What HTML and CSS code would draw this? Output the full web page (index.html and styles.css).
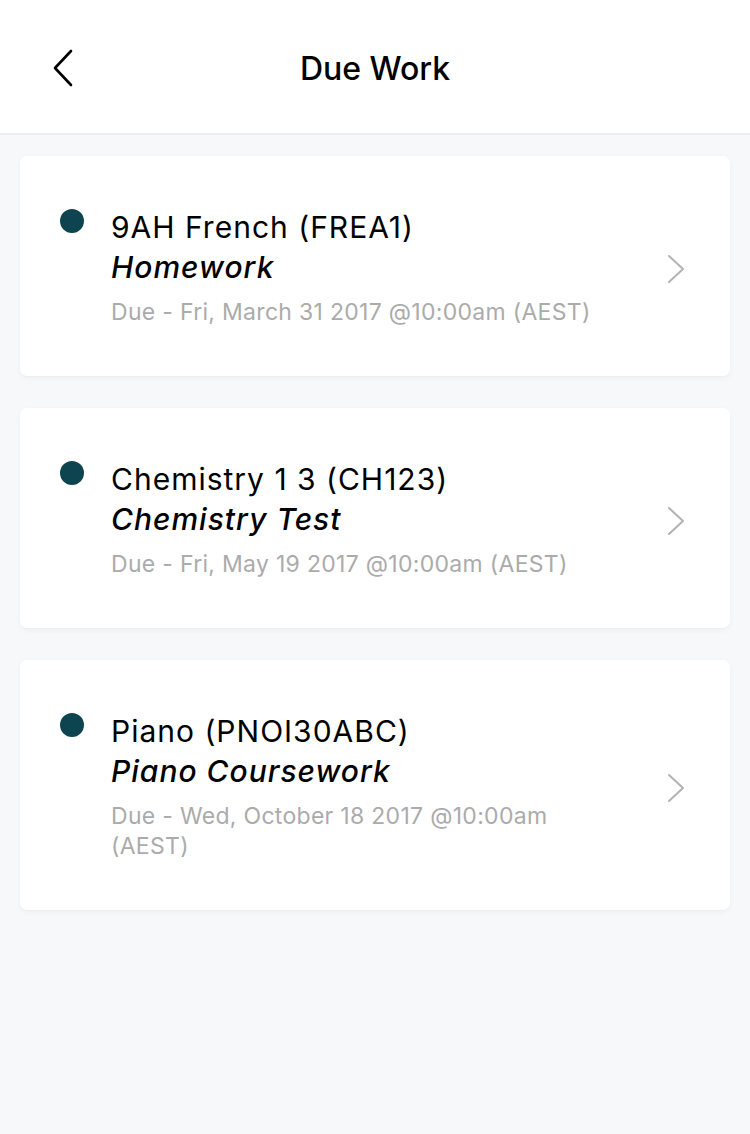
FILE: index.html
```
<!DOCTYPE html>
<html>
<head>
<meta charset="utf-8">
<link rel="stylesheet" href="styles.css">
</head>
<body>
<header class="topbar">
  <button class="back" aria-label="Back">
    <svg width="24" height="38" viewBox="0 0 24 38"><path d="M21 2 L5 19 L21 36" fill="none" stroke="#000" stroke-width="2.6" stroke-linecap="round" stroke-linejoin="round"/></svg>
  </button>
  <h1 class="title">Due Work</h1>
</header>
<main class="list">
  <a class="card">
    <span class="dot"></span>
    <div class="info">
      <div class="course">9AH French (FREA1)</div>
      <div class="task">Homework</div>
      <div class="due">Due - Fri, March 31 2017 @10:00am (AEST)</div>
    </div>
    <svg class="chev" width="20" height="32" viewBox="0 0 20 32"><path d="M3 3 L17 16 L3 29" fill="none" stroke="#b3b3b3" stroke-width="2" stroke-linecap="round" stroke-linejoin="round"/></svg>
  </a>
  <a class="card">
    <span class="dot"></span>
    <div class="info">
      <div class="course">Chemistry 1 3 (CH123)</div>
      <div class="task">Chemistry Test</div>
      <div class="due">Due - Fri, May 19 2017 @10:00am (AEST)</div>
    </div>
    <svg class="chev" width="20" height="32" viewBox="0 0 20 32"><path d="M3 3 L17 16 L3 29" fill="none" stroke="#b3b3b3" stroke-width="2" stroke-linecap="round" stroke-linejoin="round"/></svg>
  </a>
  <a class="card">
    <span class="dot"></span>
    <div class="info">
      <div class="course">Piano (PNOI30ABC)</div>
      <div class="task">Piano Coursework</div>
      <div class="due">Due - Wed, October 18 2017 @10:00am (AEST)</div>
    </div>
    <svg class="chev" width="20" height="32" viewBox="0 0 20 32"><path d="M3 3 L17 16 L3 29" fill="none" stroke="#b3b3b3" stroke-width="2" stroke-linecap="round" stroke-linejoin="round"/></svg>
  </a>
</main>
</body>
</html>
```
FILE: styles.css
```
html, body {
  margin: 0;
  padding: 0;
}
body {
  width: 750px;
  min-height: 1134px;
  background: #f7f8fa;
  font-family: Inter, "Noto Sans", sans-serif;
  color: #000;
}
.topbar {
  height: 133px;
  background: #fff;
  border-bottom: 2px solid #eceef1;
  display: flex;
  align-items: center;
  justify-content: center;
  position: relative;
}
.back {
  position: absolute;
  left: 50px;
  top: 49px;
  padding: 0;
  border: 0;
  background: none;
  display: flex;
}
.title {
  margin: 0 0 -4px;
  font-size: 32px;
  font-weight: 500;
}
.list {
  padding: 21px 20px;
  display: flex;
  flex-direction: column;
  gap: 32px;
}
.card {
  background: #fff;
  border-radius: 7px;
  box-shadow: 0 2px 6px rgba(0, 0, 0, 0.04), 0 1px 1px rgba(0, 0, 0, 0.02);
  display: flex;
  align-items: flex-start;
  padding: 51px 44px 49px 40px;
}
.dot {
  width: 24px;
  height: 24px;
  border-radius: 50%;
  background: #0d4450;
  flex: none;
  margin-top: 2px;
}
.info {
  flex: 1;
  margin-left: 27px;
  padding-right: 52px;
}
.course {
  font-size: 30px;
  line-height: 40px;
  letter-spacing: 1px;
}
.task {
  font-size: 30px;
  line-height: 40px;
  letter-spacing: 1px;
  font-style: italic;
  font-weight: 500;
}
.due {
  font-size: 23px;
  line-height: 30px;
  letter-spacing: 0.3px;
  color: #ababab;
  margin-top: 10px;
}
.chev {
  flex: none;
  align-self: center;
  margin-top: 3px;
}
```
